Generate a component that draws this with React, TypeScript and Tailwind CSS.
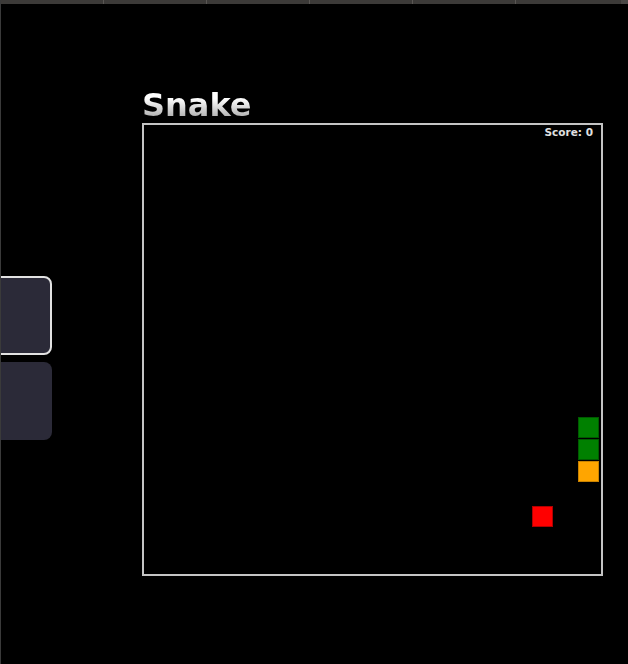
import React from 'react';

const cells = [
  { left: 434, top: 292, cls: 'bg-[#008000] border-[#005a00]' },
  { left: 434, top: 314, cls: 'bg-[#008000] border-[#005a00]' },
  { left: 434, top: 336, cls: 'bg-[#ffa500] border-[#c98200]' },
  { left: 388, top: 381, cls: 'bg-[#ff0000] border-[#b00000]' },
];

const App: React.FC = () => {
  return (
    <div className="h-[664px] w-full overflow-hidden bg-black border-l border-[#3a3a3a] font-['DejaVu_Sans',sans-serif]">
      {/* tab strip */}
      <div className="flex h-1 bg-[#3c3a38]">
        {[0, 1, 2, 3, 4].map(i => (
          <div key={i} className="w-[103px] border-r border-[#5a5754]" />
        ))}
        <div className="flex-1" />
        <div className="w-[7px] bg-[#4a4846]" />
      </div>

      <div className="flex">
        {/* side cards */}
        <div className="flex flex-col gap-[7px] pt-[272px] -ml-[10px] w-[61px] shrink-0">
          <div className="h-[79px] rounded-lg bg-[#2b2a38] border-2 border-[#e2e2e2]" />
          <div className="h-[78px] rounded-lg bg-[#2b2a38]" />
        </div>

        {/* game */}
        <div className="ml-[90px] pt-[84px]">
          <h1 className="text-[32px] leading-[35px] font-bold bg-gradient-to-b from-white from-30% to-[#9a9a9a] bg-clip-text text-transparent">
            Snake
          </h1>
          <div className="relative w-[461px] h-[453px] border-2 border-[#c4c4c4]">
            <span className="absolute right-[8px] top-[0px] text-[10.5px] font-bold text-[#e0e0e0]">Score: 0</span>
            {cells.map((c, i) => (
              <div
                key={i}
                className={`absolute w-[21px] h-[21px] border ${c.cls}`}
                style={{ left: c.left, top: c.top }}
              />
            ))}
          </div>
        </div>
      </div>
    </div>
  );
};

export default App;
